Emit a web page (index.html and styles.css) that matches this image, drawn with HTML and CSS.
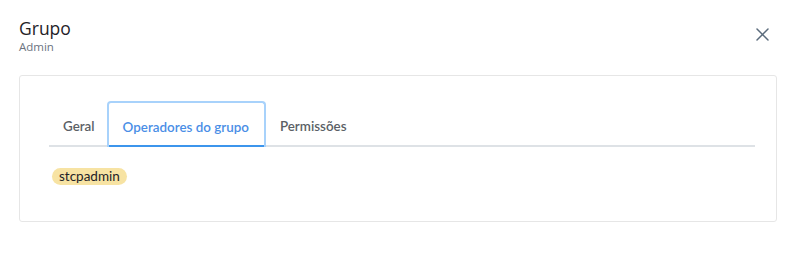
FILE: index.html
```html
<!DOCTYPE html>
<html lang="pt">
<head>
<meta charset="utf-8">
<link rel="stylesheet" href="styles.css">
</head>
<body>
<div class="modal">
  <div class="header">
    <div class="titles">
      <div class="title">Grupo</div>
      <div class="subtitle">Admin</div>
    </div>
    <button class="close" aria-label="Fechar">
      <svg width="13" height="13" viewBox="0 0 13 13"><path d="M1 1 L12 12 M12 1 L1 12" stroke="#5b6b7c" stroke-width="1.5" fill="none" stroke-linecap="round"/></svg>
    </button>
  </div>
  <div class="card">
    <div class="tabs">
      <div class="tab">Geral</div>
      <div class="tab active">Operadores do grupo</div>
      <div class="tab">Permissões</div>
    </div>
    <div class="content">
      <span class="badge">stcpadmin</span>
    </div>
  </div>
</div>
</body>
</html>
```
FILE: styles.css
```css
* { box-sizing: border-box; }
body { margin: 0; background: #fff; font-family: "Lato", "Open Sans", sans-serif; }
.modal { padding: 17px 20px 0 19px; }
.header { display: flex; justify-content: space-between; align-items: flex-start; height: 40px; }
.title { font-family: "Open Sans", sans-serif; font-size: 17.5px; color: #1f2328; line-height: 22px; }
.subtitle { font-family: "Open Sans", sans-serif; font-size: 11.5px; color: #6b7380; line-height: 14px; margin-top: 1px; }
.close { background: none; border: 0; padding: 0; margin: 11px 8px 0 0; width: 13px; height: 13px; display: flex; }
.card { margin-top: 18px; border: 1px solid #e6e6e6; border-radius: 3px; padding: 25px 21px 36px 29px; }
.tabs { display: flex; border-bottom: 2px solid #dee2e6; height: 46px; }
.tab { font-size: 13.4px; font-weight: 600; color: #5b5f66; padding: 4px 12px 0 14px; display: flex; align-items: center; margin-bottom: -2px; height: 46px; }
.tab.active { color: #4a8ee6; border: 2px solid #a8d2fb; border-bottom: none; border-radius: 4px 4px 0 0; padding: 4px 15px 0 14px; box-shadow: inset 0 -2px 0 #3c95ec; }
.content { padding-top: 21px; padding-left: 3px; display: flex; }
.badge { display: block; background: #f7e3a3; color: #1e2228; font-size: 13.5px; line-height: 17px; height: 17px; padding: 0 7px 0 7px; border-radius: 9px; }
```
